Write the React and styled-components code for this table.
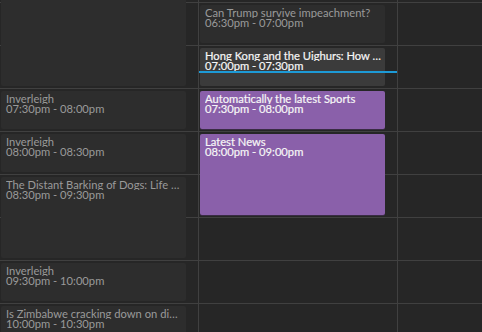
import React from 'react';
import styled, { createGlobalStyle } from 'styled-components';

const SLOT = 43;
const ORIGIN = -41; // y of the 06:00pm line
const NOW = 18 * 60 + 78;

const GlobalStyle = createGlobalStyle`
  html, body {
    margin: 0;
    padding: 0;
    background: #262626;
    overflow: hidden;
  }
  body {
    font-family: Lato, "Liberation Sans", Arial, sans-serif;
  }
`;

const Wrapper = styled.div`
  display: flex;
  flex-direction: row;
  width: 482px;
  height: 332px;
  background: #262626;
  overflow: hidden;
`;

const Column = styled.div`
  position: relative;
  flex: ${({ grow }) => (grow ? 1 : '0 0 198px')};
  border-right: ${({ grow }) => (grow ? 'none' : '1px solid #404040')};
  overflow: hidden;
`;

const Slots = styled.div`
  display: flex;
  flex-direction: column;
  margin-top: -40px;
`;

const Slot = styled.div`
  height: 42px;
  border-bottom: 1px solid #404040;
`;

const Event = styled.div`
  position: absolute;
  left: 1px;
  width: 185px;
  box-sizing: border-box;
  padding: 3px 4px 3px 5px;
  border-radius: 2px;
  overflow: hidden;
  background: ${({ kind }) => ({ past: '#2d2d2d', now: '#3b3b3b', future: '#8a60aa' }[kind])};
  color: ${({ kind }) => (kind === 'past' ? '#9a9a9a' : '#f6f6f6')};
  box-shadow: ${({ kind }) => (kind === 'future' ? '0 1px 0 #3a2c45' : 'none')};
  font-size: 11.2px;
  line-height: 10px;
  -webkit-text-stroke: ${({ kind }) => (kind === 'past' ? '0' : '0.2px')};
`;

const Title = styled.div`
  white-space: nowrap;
  overflow: hidden;
  text-overflow: ellipsis;
`;

const Time = styled.div`
  white-space: nowrap;
`;

const NowLine = styled.div`
  position: absolute;
  left: 0;
  right: -1px;
  height: 2px;
  background: #1d9ad6;
  z-index: 2;
`;

const fmt = (m) => {
  const h = Math.floor(m / 60) % 12 || 12;
  const mm = m % 60;
  return `${String(h).padStart(2, '0')}:${String(mm).padStart(2, '0')}pm`;
};

const yFor = (m) => ORIGIN + ((m - 18 * 60) / 30) * SLOT;

const columns = [
  {
    past: true,
    events: [
      { title: 'Inverleigh', start: 1080, end: 1170 },
      { title: 'Inverleigh', start: 1170, end: 1200 },
      { title: 'Inverleigh', start: 1200, end: 1230 },
      { title: 'The Distant Barking of Dogs: Life in a Frontline Village', start: 1230, end: 1290 },
      { title: 'Inverleigh', start: 1290, end: 1320 },
      { title: 'Is Zimbabwe cracking down on dissent?', start: 1320, end: 1350 },
    ],
  },
  {
    today: true,
    events: [
      { title: 'Can Trump survive impeachment?', start: 1110, end: 1140 },
      { title: 'Hong Kong and the Uighurs: How China', start: 1140, end: 1170 },
      { title: 'Automatically the latest Sports', start: 1170, end: 1200 },
      { title: 'Latest News', start: 1200, end: 1260 },
    ],
  },
  { events: [] },
];

const kindOf = ({ start, end }, past) => {
  if (past || end <= NOW) return 'past';
  if (start <= NOW) return 'now';
  return 'future';
};

const CalendarEvent = ({ event, past }) => {
  const kind = kindOf(event, past);
  const top = yFor(event.start) + 3;
  const height = ((event.end - event.start) / 30) * SLOT - 5;
  return (
    <Event kind={kind} style={{ top, height }}>
      <Title>{event.title}</Title>
      <Time>{`${fmt(event.start)} - ${fmt(event.end)}`}</Time>
    </Event>
  );
};

const App = () => (
  <Wrapper>
    <GlobalStyle />
    {columns.map(({ events, past, today }, i) => (
      <Column key={i} grow={i === columns.length - 1}>
        <Slots>
          {Array.from({ length: 9 }).map((_, s) => (
            <Slot key={s} />
          ))}
        </Slots>
        {events.map((ev) => (
          <CalendarEvent key={`${ev.start}-${ev.title}`} event={ev} past={past} />
        ))}
        {today && <NowLine style={{ top: Math.round(yFor(NOW)) }} />}
      </Column>
    ))}
  </Wrapper>
);

export default App;
